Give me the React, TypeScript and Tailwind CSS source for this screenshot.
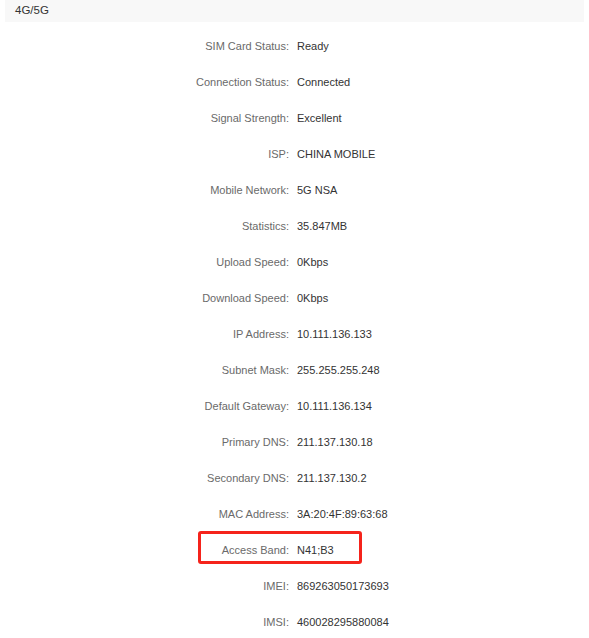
const rows: [string, string][] = [
  ['SIM Card Status', 'Ready'],
  ['Connection Status', 'Connected'],
  ['Signal Strength', 'Excellent'],
  ['ISP', 'CHINA MOBILE'],
  ['Mobile Network', '5G NSA'],
  ['Statistics', '35.847MB'],
  ['Upload Speed', '0Kbps'],
  ['Download Speed', '0Kbps'],
  ['IP Address', '10.111.136.133'],
  ['Subnet Mask', '255.255.255.248'],
  ['Default Gateway', '10.111.136.134'],
  ['Primary DNS', '211.137.130.18'],
  ['Secondary DNS', '211.137.130.2'],
  ['MAC Address', '3A:20:4F:89:63:68'],
  ['Access Band', 'N41;B3'],
  ['IMEI', '869263050173693'],
  ['IMSI', '460028295880084'],
];

export default function App() {
  return (
    <div
      className="w-[589px] h-[638px] bg-white overflow-hidden text-[11px]"
      style={{ fontFamily: '"Liberation Sans", Arial, sans-serif' }}
    >
      <div className="mx-[5px] h-[22px] bg-[#f8f8f8] flex items-center pl-[10px] text-[11.5px] text-[#333]">
        4G/5G
      </div>
      <div className="pt-[6px]">
        {rows.map(([label, value]) => (
          <div key={label} className="relative flex items-center h-[36px]">
            <div className="w-[289px] text-right text-[#6a6a6a]">{label}:</div>
            <div className="pl-[8px] text-[#333]">{value}</div>
            {/* highlight box drawn over the row */}
            {label === 'Access Band' && (
              <div className="absolute left-[198px] top-[-1px] w-[164px] h-[33px] border-[3px] border-[#f5231b] rounded-[3px]" />
            )}
          </div>
        ))}
      </div>
    </div>
  );
}
